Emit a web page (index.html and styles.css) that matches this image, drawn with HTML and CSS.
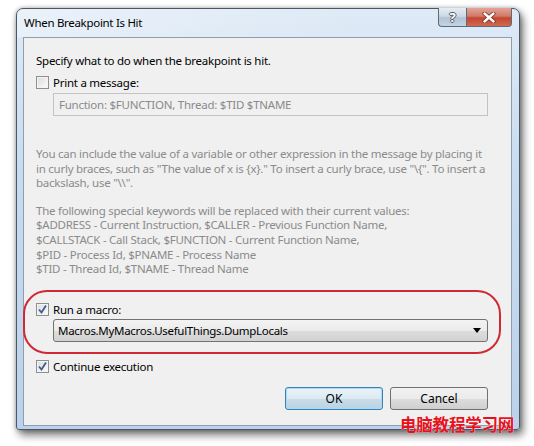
FILE: index.html
```html
<!DOCTYPE html>
<html>
<head>
<meta charset="utf-8">
<link rel="stylesheet" href="styles.css">
</head>
<body>
<div class="window">
  <div class="titlebar">
    <span class="title">When Breakpoint Is Hit</span>
    <div class="caption-btns">
      <span class="cap help">?</span>
      <span class="cap close"><svg width="14" height="11" viewBox="0 0 14 11"><path d="M2.5 1.5 L11.5 9.5 M11.5 1.5 L2.5 9.5" stroke="#7a2a20" stroke-width="4" stroke-linecap="round"/><path d="M2.5 1.5 L11.5 9.5 M11.5 1.5 L2.5 9.5" stroke="#ffffff" stroke-width="2.4" stroke-linecap="round"/></svg></span>
    </div>
  </div>
  <div class="client">
    <div class="line">Specify what to do when the breakpoint is hit.</div>
    <label class="check-row row-print"><span class="box"></span>Print a message:</label>
    <div class="textbox">Function: $FUNCTION, Thread: $TID $TNAME</div>
    <p class="hint hint1">You can include the value of a variable or other expression in the message by placing it in curly braces, such as "The value of x is {x}." To insert a curly brace, use "\{". To insert a backslash, use "\\".</p>
    <p class="hint hint2">The following special keywords will be replaced with their current values:<br>$ADDRESS - Current Instruction, $CALLER - Previous Function Name,<br>$CALLSTACK - Call Stack, $FUNCTION - Current Function Name,<br>$PID - Process Id, $PNAME - Process Name<br>$TID - Thread Id, $TNAME - Thread Name</p>
    <div class="macro-group">
      <label class="check-row"><span class="box checked"><svg width="11" height="11" viewBox="0 0 11 11"><path d="M2 5.5 L4.5 8.5 L9 1.5" fill="none" stroke="#3f5a94" stroke-width="1.8"/></svg></span>Run a macro:</label>
      <div class="combo"><span>Macros.MyMacros.UsefulThings.DumpLocals</span><svg class="arrow" width="8" height="5" viewBox="0 0 8 5"><path d="M0 0 H8 L4 5 Z" fill="#000"/></svg></div>
      <div class="ring"></div>
    </div>
    <label class="check-row row-continue"><span class="box checked"><svg width="11" height="11" viewBox="0 0 11 11"><path d="M2 5.5 L4.5 8.5 L9 1.5" fill="none" stroke="#3f5a94" stroke-width="1.8"/></svg></span>Continue execution</label>
    <div class="buttons">
      <button class="btn default">OK</button>
      <button class="btn">Cancel</button>
    </div>
  </div>
</div>
<div class="watermark">电脑教程学习网</div>
</body>
</html>
```
FILE: styles.css
```css
html, body {
  margin: 0;
  padding: 0;
  background: #ffffff;
}
body {
  width: 534px;
  height: 446px;
  overflow: hidden;
  position: relative;
  font-family: "Noto Sans", "Open Sans", sans-serif;
  font-size: 11.5px;
  letter-spacing: -0.25px;
  color: #000;
}
.window {
  margin: 8px 0 0 16px;
  width: 502px;
  height: 420px;
  border: 1px solid #4a5766;
  border-radius: 7px 7px 3px 3px;
  background: linear-gradient(180deg, #dfeaf6 0%, #c8dbef 40%, #bcd2ea 100%);
  box-shadow: 3px 5px 9px rgba(0,0,0,0.55), 0 0 4px rgba(0,0,0,0.3);
  display: flex;
  flex-direction: column;
}
.titlebar {
  height: 28px;
  display: flex;
  align-items: flex-start;
  justify-content: space-between;
  background: linear-gradient(90deg, rgba(255,255,255,0.35), rgba(255,255,255,0) 70%);
  border-radius: 6px 6px 0 0;
}
.title {
  margin: 6px 0 0 7px;
  font-size: 11.5px;
  letter-spacing: -0.3px;
  line-height: 15px;
}
.caption-btns {
  display: flex;
  margin-right: 7px;
  margin-top: -1px;
}
.cap {
  height: 19px;
  border: 1px solid #5b6b7c;
  border-top: none;
  display: flex;
  align-items: center;
  justify-content: center;
  box-sizing: border-box;
}
.help {
  width: 28px;
  border-radius: 0 0 0 4px;
  border-right: none;
  background: linear-gradient(180deg, #e4ecf4 0%, #cdd9e5 45%, #b3c3d4 55%, #c4d3e2 100%);
  color: #fff;
  font-weight: bold;
  font-size: 13px;
  letter-spacing: 0;
  text-shadow: 1px 0 0 #4d5966, -1px 0 0 #4d5966, 0 1px 0 #4d5966, 0 -1px 0 #4d5966;
}
.close {
  width: 46px;
  border-radius: 0 0 4px 0;
  background: linear-gradient(180deg, #e3a497 0%, #d27a69 45%, #c4452f 55%, #d06a4f 100%);
}
.client {
  flex: 1;
  margin: 0 7px 3px 6px;
  border: 1px solid #8d9eb1;
  background: #f0f0f0;
  padding: 15px 23px 0 12px;
  display: flex;
  flex-direction: column;
}
.line {
  line-height: 15px;
}
.check-row {
  display: flex;
  align-items: center;
  gap: 4px;
  line-height: 15px;
}
.row-print {
  margin-top: 7px;
}
.box {
  width: 11px;
  height: 11px;
  border: 1px solid #8e8f8f;
  background: linear-gradient(135deg, #dcdcdc, #fbfbfb);
  box-shadow: inset 0 0 0 1px #f4f4f4;
  display: flex;
  align-items: center;
  justify-content: center;
}
.textbox {
  margin: 3px 0 0 17px;
  height: 21px;
  border: 1px solid #c3c3c3;
  color: #8a8a8a;
  padding-left: 5px;
  line-height: 21px;
}
.hint {
  margin: 0;
  color: #8b8b8b;
  line-height: 14.6px;
}
.hint1 {
  margin-top: 31px;
}
.hint2 {
  margin-top: 13px;
}
.macro-group {
  position: relative;
  margin-top: 25px;
}
.ring {
  position: absolute;
  left: -13px;
  right: -13px;
  top: -12px;
  bottom: -12px;
  border: 2px solid #cf2a33;
  border-radius: 24px;
  pointer-events: none;
}
.combo {
  margin: 2px 0 0 17px;
  height: 21px;
  border: 1px solid #727272;
  border-radius: 3px;
  background: linear-gradient(180deg, #f3f3f3 0%, #ebebeb 50%, #dddddd 51%, #d2d2d2 100%);
  display: flex;
  align-items: center;
  justify-content: space-between;
  padding: 0 6px 0 4px;
  font-size: 11.5px;
  letter-spacing: -0.3px;
}
.row-continue {
  margin-top: 17px;
}
.buttons {
  display: flex;
  justify-content: flex-end;
  gap: 7px;
  margin-top: 13px;
}
.btn {
  width: 98px;
  height: 23px;
  font-family: inherit;
  font-size: 12px;
  color: #000;
  border: 1px solid #707070;
  border-radius: 3px;
  background: linear-gradient(180deg, #f2f2f2 0%, #ebebeb 50%, #dddddd 51%, #cfcfcf 100%);
  padding: 0;
}
.btn.default {
  border-color: #3c7fb1;
  background: linear-gradient(180deg, #eaf3f9 0%, #dde9f1 50%, #c9dde9 51%, #b9d3e3 100%);
  box-shadow: inset 0 0 0 1px #a9dbf5;
}
.watermark {
  position: absolute;
  left: 400px;
  top: 414px;
  font-family: "Noto Sans CJK SC", sans-serif;
  font-weight: bold;
  font-size: 16.5px;
  line-height: 20px;
  color: #e8101a;
  letter-spacing: -0.2px;
  text-shadow: 0 0 1px #fff;
}
```
